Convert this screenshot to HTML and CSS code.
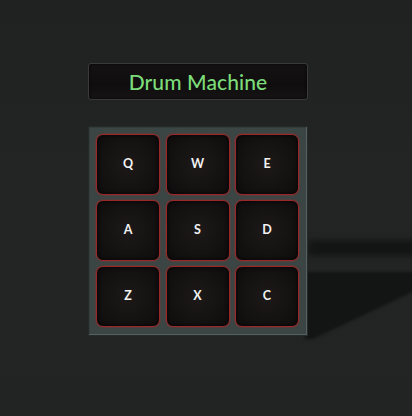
FILE: index.html
```html
<!DOCTYPE html>
<html>
<head>
<meta charset="utf-8">
<link rel="stylesheet" href="styles.css">
</head>
<body>
<main class="machine">
  <div class="display">Drum Machine</div>
  <div class="pad-panel">
    <div class="shadow-strip"></div>
    <div class="shadow-long"><div class="shadow-shape"></div></div>
    <div class="pads">
      <button class="pad">Q</button>
      <button class="pad">W</button>
      <button class="pad">E</button>
      <button class="pad">A</button>
      <button class="pad">S</button>
      <button class="pad">D</button>
      <button class="pad">Z</button>
      <button class="pad">X</button>
      <button class="pad">C</button>
    </div>
  </div>
</main>
</body>
</html>
```
FILE: styles.css
```css
html, body {
  margin: 0;
  height: 100%;
}
body {
  background: linear-gradient(180deg, #202222 0%, #232525 50%, #222424 100%);
  font-family: "Lato", "Noto Sans", sans-serif;
  overflow: hidden;
}
.machine {
  display: flex;
  flex-direction: column;
  align-items: flex-start;
  padding: 63px 0 0 88px;
  gap: 26px;
}
.display {
  box-sizing: border-box;
  width: 220px;
  height: 37px;
  display: flex;
  align-items: center;
  justify-content: center;
  background: linear-gradient(180deg, #141212 0%, #0f0d0d 60%, #161414 100%);
  border: 1px solid #3a3a3a;
  border-radius: 3px;
  box-shadow: inset 0 0 3px rgba(0,0,0,0.8);
  color: #7ddc7a;
  font-size: 21px;
  font-weight: 500;
  letter-spacing: 0.1px;
  padding-bottom: 1px;
}
.pad-panel {
  position: relative;
  box-sizing: border-box;
  width: 220px;
  height: 210px;
  background: #3b4544;
  border: 1px solid #252a2a;
  box-shadow: inset -1px -1px 0 #56605f, inset 1px 1px 0 #333c3b;
  padding: 7px 8px 8px 7px;
}
.shadow-strip {
  position: absolute;
  left: 219px;
  top: 113px;
  width: 120px;
  height: 16px;
  background: #131514;
  filter: blur(3px);
  z-index: -1;
}
.shadow-long {
  position: absolute;
  left: 216px;
  top: 140px;
  width: 120px;
  height: 72px;
  filter: blur(1.5px);
  z-index: -1;
}
.shadow-shape {
  width: 100%;
  height: 100%;
  background: #131514;
  clip-path: polygon(0 5px, 120px 5px, 120px 19px, 8px 72px, 0 72px);
}
.pads {
  display: grid;
  grid-template-columns: repeat(3, 64px);
  grid-template-rows: repeat(3, 61px);
  column-gap: 5.5px;
  row-gap: 5px;
}
.pad {
  box-sizing: border-box;
  margin: 0;
  padding: 0;
  border: 1.5px solid #9a2828;
  border-radius: 7px;
  background: radial-gradient(circle at 50% 50%, #1d1919 0%, #141111 60%, #0e0c0c 100%);
  box-shadow: 0 0 2px rgba(200, 35, 35, 0.65), inset 0 0 4px rgba(0,0,0,0.9);
  color: #f2f2f2;
  font-family: "Lato", "Noto Sans", sans-serif;
  font-size: 12.5px;
  font-weight: 700;
  display: flex;
  align-items: center;
  justify-content: center;
  padding-bottom: 2px;
}
```
